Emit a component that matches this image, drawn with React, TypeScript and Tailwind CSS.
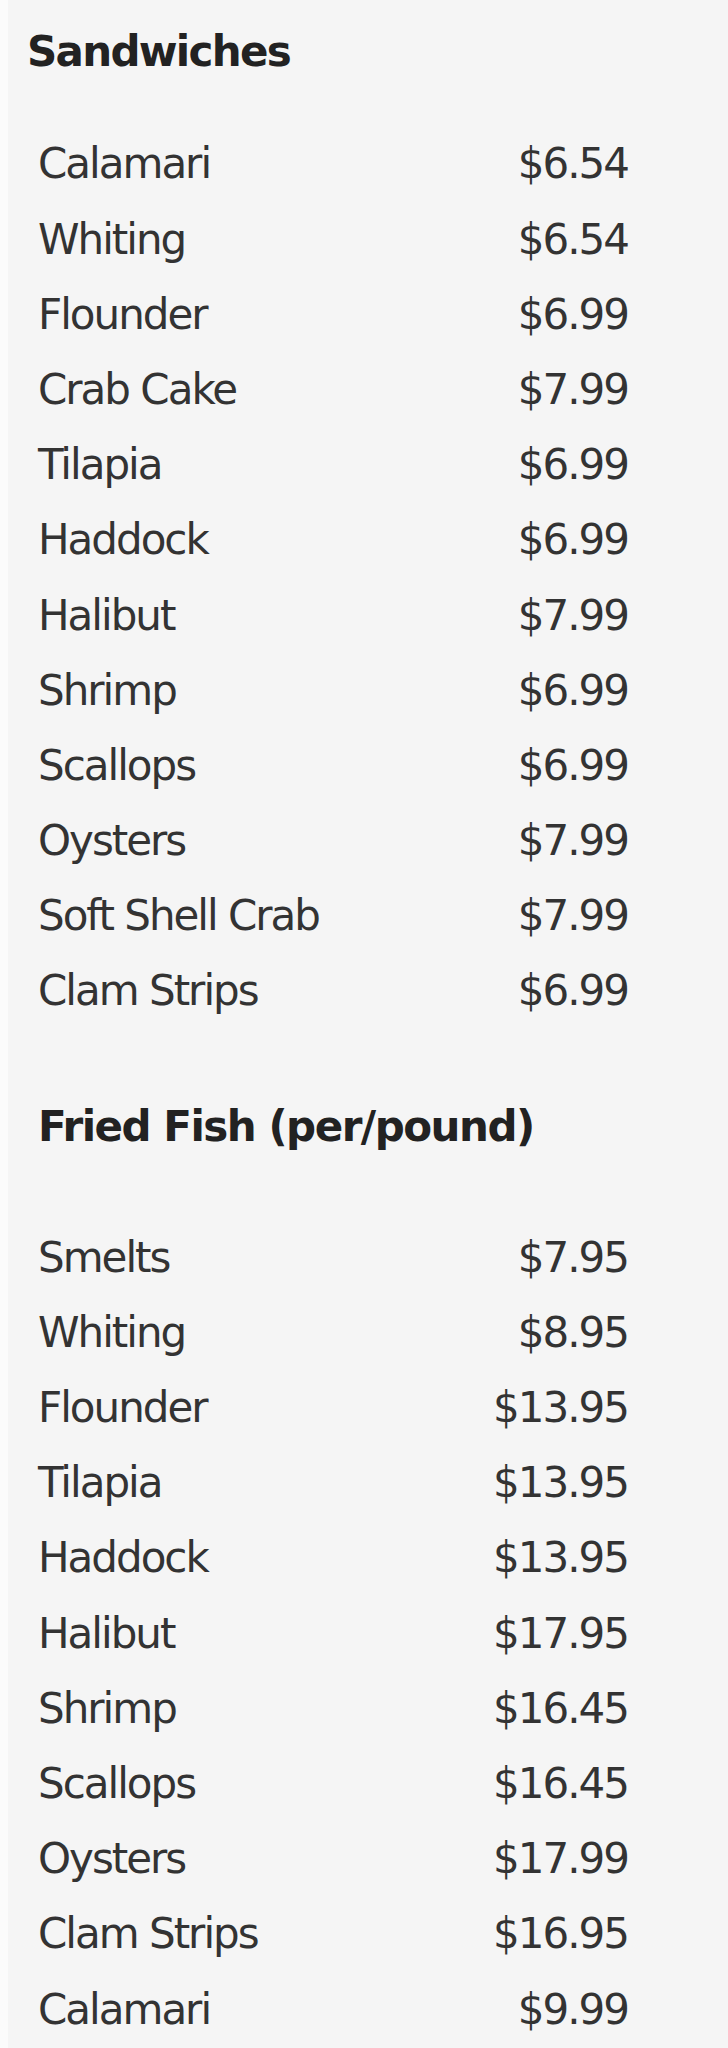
const sandwiches: [string, string][] = [
  ["Calamari", "$6.54"],
  ["Whiting", "$6.54"],
  ["Flounder", "$6.99"],
  ["Crab Cake", "$7.99"],
  ["Tilapia", "$6.99"],
  ["Haddock", "$6.99"],
  ["Halibut", "$7.99"],
  ["Shrimp", "$6.99"],
  ["Scallops", "$6.99"],
  ["Oysters", "$7.99"],
  ["Soft Shell Crab", "$7.99"],
  ["Clam Strips", "$6.99"],
];

const friedFish: [string, string][] = [
  ["Smelts", "$7.95"],
  ["Whiting", "$8.95"],
  ["Flounder", "$13.95"],
  ["Tilapia", "$13.95"],
  ["Haddock", "$13.95"],
  ["Halibut", "$17.95"],
  ["Shrimp", "$16.45"],
  ["Scallops", "$16.45"],
  ["Oysters", "$17.99"],
  ["Clam Strips", "$16.95"],
  ["Calamari", "$9.99"],
];

function MenuRow({ name, price }: { name: string; price: string }) {
  return (
    <div className="flex items-center justify-between h-[75.2px] leading-[75.2px] pl-[30px] pr-[100px]">
      <span>{name}</span>
      <span>{price}</span>
    </div>
  );
}

export default function App() {
  return (
    <div
      className="w-[728px] h-[2048px] overflow-hidden bg-[#f5f5f5] border-l-8 border-[#fbfbfb] text-[42px] text-[#333] tracking-[-2px]"
      style={{ fontFamily: '"DejaVu Sans", Verdana, sans-serif' }}
    >
      <h2 className="mt-[22px] h-[60px] leading-[60px] pl-[19px] font-bold text-[#222] tracking-[-1.7px]">
        Sandwiches
      </h2>
      <div className="mt-[44.4px]">
        {sandwiches.map(([name, price]) => (
          <MenuRow key={"s" + name} name={name} price={price} />
        ))}
      </div>
      <h2 className="mt-[68.2px] h-[60px] leading-[60px] pl-[30px] font-bold text-[#222] tracking-[-1.5px]">
        Fried Fish (per/pound)
      </h2>
      <div className="mt-[62.9px]">
        {friedFish.map(([name, price]) => (
          <MenuRow key={"f" + name} name={name} price={price} />
        ))}
      </div>
    </div>
  );
}
